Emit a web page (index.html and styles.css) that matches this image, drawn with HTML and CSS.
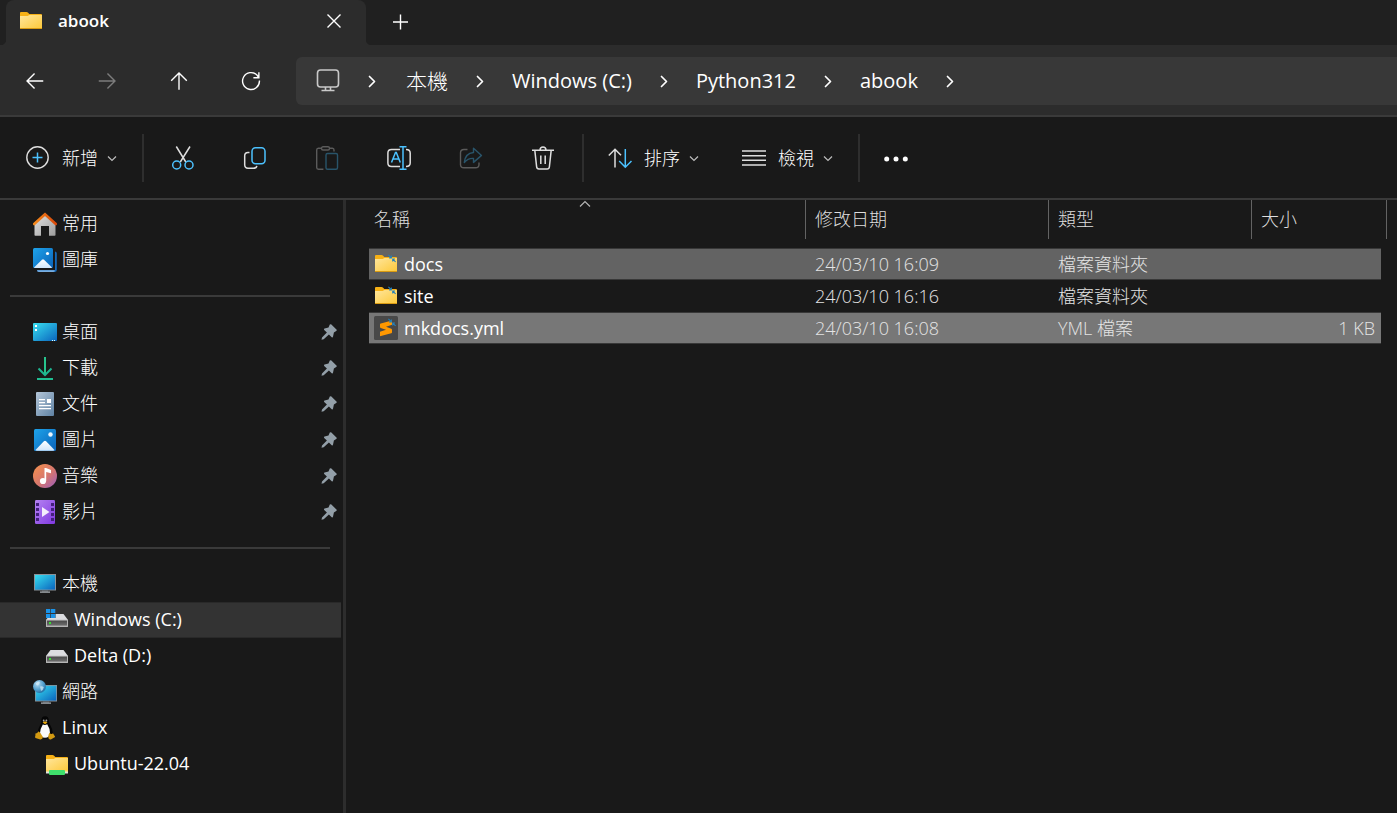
FILE: index.html
```html
<!DOCTYPE html>
<html lang="zh-Hant">
<head>
<meta charset="utf-8">
<meta name="viewport" content="width=device-width, initial-scale=1">
<title>abook</title>
<link rel="stylesheet" href="styles.css">
</head>
<body>
<svg class="defs" width="0" height="0" aria-hidden="true">
  <defs>
    <linearGradient id="gFolder" x1="0" y1="0" x2="1" y2="1"><stop offset="0" stop-color="#ffe69c"/><stop offset="1" stop-color="#fdc93a"/></linearGradient>
    <linearGradient id="gBlue" x1="0" y1="0" x2="1" y2="1"><stop offset="0" stop-color="#1ea3ea"/><stop offset="1" stop-color="#0a62b8"/></linearGradient>
    <linearGradient id="gCyan" x1="0" y1="0" x2="1" y2="1"><stop offset="0" stop-color="#38dff0"/><stop offset="1" stop-color="#0a63bd"/></linearGradient>
    <linearGradient id="gSnow" x1="0" y1="0" x2="0" y2="1"><stop offset="0" stop-color="#ffffff"/><stop offset="1" stop-color="#cfe6fb"/></linearGradient>
    <linearGradient id="gHouse" x1="0" y1="0" x2="1" y2="1"><stop offset="0" stop-color="#e4e4e4"/><stop offset="1" stop-color="#9c9c9c"/></linearGradient>
    <linearGradient id="gRoof" x1="0" y1="0" x2="1" y2="0"><stop offset="0" stop-color="#f58a1c"/><stop offset="1" stop-color="#d9480a"/></linearGradient>
    <linearGradient id="gDoc" x1="0" y1="0" x2="1" y2="1"><stop offset="0" stop-color="#b4c6d8"/><stop offset="1" stop-color="#5f82a3"/></linearGradient>
    <linearGradient id="gMusic" x1="0" y1="0" x2="1" y2="1"><stop offset="0" stop-color="#f7924a"/><stop offset=".55" stop-color="#d5766f"/><stop offset="1" stop-color="#9a5cc0"/></linearGradient>
    <linearGradient id="gVideo" x1="0" y1="0" x2="1" y2="1"><stop offset="0" stop-color="#b583f2"/><stop offset="1" stop-color="#8038e0"/></linearGradient>
    <linearGradient id="gDrive" x1="0" y1="0" x2="0" y2="1"><stop offset="0" stop-color="#4a4a4a"/><stop offset="1" stop-color="#6e6e6e"/></linearGradient>
    <radialGradient id="gGlobe" cx=".35" cy=".3" r=".8"><stop offset="0" stop-color="#b5dcf2"/><stop offset=".6" stop-color="#4e9ccb"/><stop offset="1" stop-color="#1d5f96"/></radialGradient>

    <symbol id="folder" viewBox="0 0 24 24">
      <path d="M1 4q0-1 1-1h5.500q.8 0 1.400.600L10.300 5H22q1 0 1 1v6H1z" fill="#f7b116"/>
      <path d="M1 7h7q.8 0 1.500-.5L10.500 6H23v13.500H1z" fill="url(#gFolder)"/>
      <path d="M1 19h22v1H1z" fill="#d99a12"/>
    </symbol>
    <symbol id="compress" viewBox="0 0 10 10">
      <path d="M1 1l3.300 3.300M1.800 4.300h2.500V1.600M9 8.800L5.800 5.600M8.300 5.600H5.800v2.600" fill="none" stroke="#2580b8" stroke-width="1.200"/>
    </symbol>
    <symbol id="pin" viewBox="0 0 16 16">
      <path d="M8.800.6q.8-.8 1.600 0l5 4.800q.9.800-.2 1.600l-2.300 1.600-.9 4.200q-.4 1.200-1.300.4L7.900 10.600l-5.200 4.700-2.200.5.500-2.200 4.900-5L3.200 5.900q-.6-.9.400-1.300l3.900-1.200z" fill="#939fa8"/>
    </symbol>
    <symbol id="chev" viewBox="0 0 12 12"><path d="M2 4.500l4 4 4-4" fill="none" stroke="#bdbdbd" stroke-width="1.200"/></symbol>
    <symbol id="crumb" viewBox="0 0 16 16"><path d="M5.500 3.500l5 5-5 5" fill="none" stroke="#fff" stroke-width="1.700" stroke-linecap="round" stroke-linejoin="round"/></symbol>
    <symbol id="monitor" viewBox="0 0 24 24">
      <path d="M1 2h22v16.500H1z" fill="#8a9299"/><path d="M2 3h20v14.600H2z" fill="url(#gCyan)"/>
      <path d="M9 18.500h6v1H9z" fill="#6d757b"/><path d="M7 19.500h10v1.200H7z" fill="#b4bbc0"/>
    </symbol>
    <symbol id="drive" viewBox="0 0 24 24">
      <path d="M5.500 6h13l4.500 6H1z" fill="#dcdde0"/><path d="M1 11.800h22v6.700q0 .5-.5.500h-21q-.5 0-.5-.5z" fill="#b5b5b5"/>
      <path d="M2 12.600h20v5H2z" fill="url(#gDrive)"/><path d="M4 14h2v2H4z" fill="#35e02f"/>
    </symbol>
  </defs>
</svg>

<header class="titlebar">
  <div class="tab">
    <svg class="icon"><use href="#folder"/></svg>
    <span class="tab-title">abook</span>
    <button class="icon-btn" type="button" aria-label="關閉索引標籤">
      <svg class="icon" viewBox="0 0 24 24"><path d="M5.500 5.500l13 13M18.500 5.500l-13 13" fill="none" stroke="#fff" stroke-width="1.400"/></svg>
    </button>
  </div>
  <button class="icon-btn new-tab" type="button" aria-label="新增索引標籤">
    <svg class="icon" viewBox="0 0 24 24"><path d="M12.500 4.500v15M5 12h15" fill="none" stroke="#fff" stroke-width="1.400"/></svg>
  </button>
</header>

<div class="navbar">
  <div class="nav-buttons">
    <button class="icon-btn" type="button" aria-label="上一頁"><svg class="icon line" viewBox="0 0 24 24"><path d="M21 12H3.500M11.500 3.800L3.300 12l8.200 8.200"/></svg></button>
    <button class="icon-btn dim" type="button" aria-label="下一頁" disabled><svg class="icon line" viewBox="0 0 24 24"><path d="M3 12h17.500M12.500 3.800l8.200 8.200-8.200 8.200"/></svg></button>
    <button class="icon-btn" type="button" aria-label="上一層"><svg class="icon line" viewBox="0 0 24 24"><path d="M12 21.500V3M3.500 11.700L12 3.200l8.500 8.500"/></svg></button>
    <button class="icon-btn" type="button" aria-label="重新整理"><svg class="icon line" viewBox="0 0 24 24"><path d="M21.200 11.500a9.200 9.200 0 1 1-2.700-6l1.800 2.500M20.600 2.500v6h-6"/></svg></button>
  </div>
  <nav class="address" aria-label="路徑">
    <button class="icon-btn" type="button" aria-label="位置"><svg class="icon" viewBox="0 0 24 24" fill="none" stroke="#c9c9c9" stroke-width="1.600"><rect x="1.500" y="1" width="21" height="17" rx="3"/><path d="M9.500 18v3.500M14.500 18v3.500M5.500 21.500h13"/></svg></button>
    <svg class="crumb"><use href="#crumb"/></svg>
    <button class="cjk" type="button">本機</button>
    <svg class="crumb"><use href="#crumb"/></svg>
    <button type="button">Windows (C:)</button>
    <svg class="crumb"><use href="#crumb"/></svg>
    <button type="button">Python312</button>
    <svg class="crumb"><use href="#crumb"/></svg>
    <button type="button">abook</button>
    <svg class="crumb"><use href="#crumb"/></svg>
  </nav>
</div>

<div class="toolbar" role="toolbar" aria-label="命令">
  <button class="cmd" type="button">
    <svg class="icon" viewBox="0 0 24 24" fill="none"><circle cx="11.500" cy="11.500" r="10.700" stroke="#dedede" stroke-width="1.400"/><path d="M11.500 6.500v10M6.500 11.500h10" stroke="#4cc2ff" stroke-width="1.500"/></svg>
    <span>新增</span><svg class="chev"><use href="#chev"/></svg>
  </button>
  <span class="sep"></span>
  <div class="cmd-icons">
    <button class="icon-btn" type="button" aria-label="剪下"><svg class="icon" viewBox="0 0 24 24" fill="none" stroke-width="1.500"><path d="M5.300.5L14.800 16M19 .5L9.300 16" stroke="#dedede"/><circle cx="5.700" cy="19" r="4" stroke="#4cc2ff"/><circle cx="18" cy="19" r="4" stroke="#4cc2ff"/></svg></button>
    <button class="icon-btn" type="button" aria-label="複製"><svg class="icon" viewBox="0 0 24 24" fill="none" stroke-width="1.500"><path d="M6.500 6.500H5q-3.300 0-3.300 3.300v9q0 3.400 3.300 3.400h5.500q3 0 3.300-2.400" stroke="#dedede"/><rect x="9" y="1.700" width="13" height="16" rx="3.500" stroke="#4cc2ff"/></svg></button>
    <button class="icon-btn" type="button" aria-label="貼上" disabled><svg class="icon" viewBox="0 0 24 24" fill="none" stroke-width="1.400"><path d="M6.500 2.200H3.300Q1.700 2.200 1.700 4v17.500q0 1.700 1.700 1.700h5M14.500 2.200h3Q19 2.200 19 4v1.500" stroke="#5b5b5b"/><rect x="6.500" y=".8" width="8" height="3.200" rx="1.500" stroke="#5b5b5b"/><rect x="11" y="7.500" width="11.500" height="15.700" rx="1.500" stroke="#29546a"/></svg></button>
    <button class="icon-btn" type="button" aria-label="重新命名"><svg class="icon" viewBox="0 0 24 24" fill="none" stroke-width="1.500"><path d="M13 3.500H4.500Q.9 3.500.9 7v10q0 3.500 3.600 3.500H13M19 3.500q4.200 0 4.200 3.500v10q0 3.500-4.200 3.500" stroke="#dedede"/><path d="M4.500 16.500L8.500 6.500h.8l4 10M6 13h6M12.500.8h7M16 .8v22.400M12.500 23.200h7" stroke="#4cc2ff"/></svg></button>
    <button class="icon-btn" type="button" aria-label="共用" disabled><svg class="icon" viewBox="0 0 24 24" fill="none" stroke-width="1.400" stroke-linejoin="round"><path d="M8.500 3.500H5q-3.500 0-3.500 3.500v11.500q0 3.300 3.500 3.300h11.500q3.500 0 3.500-3.300v-2" stroke="#5b5b5b"/><path d="M14.500 2.200l8 7.200-8 7v-4Q9 12 5.300 16.500q.9-9.300 9.200-10z" stroke="#29546a"/></svg></button>
    <button class="icon-btn" type="button" aria-label="刪除"><svg class="icon" viewBox="0 0 24 24" fill="none" stroke="#dedede" stroke-width="1.500"><path d="M1 4.200h22M3.800 4.200l1.800 16.500q.2 2.200 2.300 2.200h8.200q2.100 0 2.300-2.200l1.800-16.500M9 4q.2-3 3-3t3 3M9.800 9.500v8.500M14.200 9.500v8.500"/></svg></button>
  </div>
  <span class="sep"></span>
  <button class="cmd" type="button">
    <svg class="icon" viewBox="0 0 24 24" fill="none" stroke-width="1.500"><path d="M7 21.500V3.500M.8 9.500L7 3.300l6 6" stroke="#dedede"/><path d="M17.300 3v18M11.200 15l6.100 6.200L23.500 15" stroke="#4cc2ff"/></svg>
    <span>排序</span><svg class="chev"><use href="#chev"/></svg>
  </button>
  <button class="cmd view" type="button">
    <svg class="icon" viewBox="0 0 24 24" stroke="#dedede" stroke-width="1.400"><path d="M0 5h24M0 9.700h24M0 14.300h24M0 19h24"/></svg>
    <span>檢視</span><svg class="chev"><use href="#chev"/></svg>
  </button>
  <span class="sep"></span>
  <button class="icon-btn" type="button" aria-label="查看更多"><svg class="icon" viewBox="0 0 24 24" fill="#fff"><circle cx="2.700" cy="13" r="2.500"/><circle cx="12" cy="13" r="2.500"/><circle cx="21.300" cy="13" r="2.500"/></svg></button>
</div>

<div class="body">
  <nav class="sidebar" aria-label="瀏覽窗格">
    <a class="item" href="#home"><svg class="icon" viewBox="0 0 24 24"><path d="M1.500 11L12 1.500 22.500 11v12q0 .8-.8.800H16v-9.800H8v9.800H2.300q-.8 0-.8-.8z" fill="url(#gHouse)"/><path d="M1.200 12L12 2.200 22.800 12" fill="none" stroke="url(#gRoof)" stroke-width="2.600" stroke-linecap="round"/></svg><span>常用</span></a>
    <a class="item" href="#gallery"><svg class="icon" viewBox="0 0 24 24"><path d="M4 21.500h17V3.500h.8q2 0 2 2V22q0 2-2 2H6q-2 0-2-2.500z" fill="#1568b8"/><path d="M4 22.200h17q.5 0 1 .6-.5 1.200-2 1.200H6q-2 0-2-1.800z" fill="#79aee0"/><path d="M0 20.500h20.500V2H22v20H2q-2 0-2-1.500z" fill="#191919"/><rect width="20" height="20" rx="1.500" fill="url(#gBlue)"/><path d="M1 19.500l8-7.700q1-.9 2 0l8 7.700q-.5.500-1.300.5H2.300q-.8 0-1.300-.5z" fill="url(#gSnow)"/><circle cx="14.500" cy="5.500" r="1.600" fill="#fff"/></svg><span>圖庫</span></a>
    <hr>
    <a class="item" href="#desktop"><svg class="icon" viewBox="0 0 24 24"><rect y="3" width="24" height="18" rx="1" fill="url(#gCyan)"/><path d="M2 5h2v2H2zM2 9h2v2H2z" fill="#fff"/><path d="M19 20h1v1h-1zM21 20h1v1h-1z" fill="#dff"/></svg><span>桌面</span><svg class="pin"><use href="#pin"/></svg></a>
    <a class="item" href="#downloads"><svg class="icon" viewBox="0 0 24 24" fill="none" stroke-width="2"><path d="M12 1v18" stroke="#27c38d"/><path d="M5.500 12.500L12 19l6.500-6.500" stroke="#1eb591"/><path d="M4 23h16" stroke="#20bd92"/></svg><span>下載</span><svg class="pin"><use href="#pin"/></svg></a>
    <a class="item" href="#documents"><svg class="icon" viewBox="0 0 24 24"><rect x="3" width="18" height="24" rx="1" fill="url(#gDoc)"/><path d="M6 7h6v1.200H6zM6 10h6v1.200H6zM6 13h12v1.200H6zM6 16h12v1.200H6zM14 7h4v4h-4z" fill="#fff"/></svg><span>文件</span><svg class="pin"><use href="#pin"/></svg></a>
    <a class="item" href="#pictures"><svg class="icon" viewBox="0 0 24 24"><rect x="1" y="1" width="22" height="22" rx="1.500" fill="url(#gBlue)"/><path d="M2.500 22l8.400-8.700q1.100-1 2.200 0l8.400 8.700q-.3.800-1.500.8H4q-1.200 0-1.500-.8z" fill="url(#gSnow)"/><circle cx="17.500" cy="6.500" r="2.200" fill="#e8f6ff"/></svg><span>圖片</span><svg class="pin"><use href="#pin"/></svg></a>
    <a class="item" href="#music"><svg class="icon" viewBox="0 0 24 24"><circle cx="12" cy="12" r="12" fill="url(#gMusic)"/><circle cx="10" cy="17" r="3.100" fill="#fff"/><path d="M11.500 4h1.500l5 2v3.300L13.200 8v9h-1.700z" fill="#fff"/></svg><span>音樂</span><svg class="pin"><use href="#pin"/></svg></a>
    <a class="item" href="#videos"><svg class="icon" viewBox="0 0 24 24"><rect x="2" width="20" height="24" rx="1.200" fill="url(#gVideo)"/><path d="M3 3h3v3H3zM3 8h3v3H3zM3 13h3v3H3zM3 18h3v3H3zM18 3h3v3h-3zM18 8h3v3h-3zM18 13h3v3h-3zM18 18h3v3h-3z" fill="#43207c"/><path d="M9 7l7.500 5L9 17z" fill="#f4eefc"/></svg><span>影片</span><svg class="pin"><use href="#pin"/></svg></a>
    <hr>
    <a class="item" href="#pc"><svg class="icon"><use href="#monitor"/></svg><span>本機</span></a>
    <a class="item child latin current" href="#c" aria-current="true"><svg class="icon" viewBox="0 0 24 24"><use href="#drive"/><path d="M0 0h10.500v10H0z" fill="#333"/><path d="M1 1h4.300v4H1zM6 1h4.300v4H6zM1 6h4.300v4H1zM6 6h4.300v4H6z" fill="#1b93e8"/></svg><span>Windows (C:)</span></a>
    <a class="item child latin" href="#d"><svg class="icon"><use href="#drive"/></svg><span>Delta (D:)</span></a>
    <a class="item" href="#network"><svg class="icon" viewBox="0 0 24 24"><path d="M2 5h22v16.500H2z" fill="#8a9299"/><path d="M2.800 5.800h20.400v14.800H2.800z" fill="url(#gCyan)"/><path d="M10 21.500h6v1h-6z" fill="#6d757b"/><path d="M8 22.500h10v1.200H8z" fill="#b4bbc0"/><circle cx="6.500" cy="6.500" r="6.500" fill="url(#gGlobe)"/><path d="M2.500 3.500q2-2.300 4-1.800 1 1.200-.5 2.300-.5 1.800-2.200 1.300zM7 6.500q2.500-.8 3.800.8-.5 2.700-2.800 3.700z" fill="#d8eefa" opacity=".7"/></svg><span>網路</span></a>
    <a class="item latin" href="#linux"><svg class="icon" viewBox="0 0 24 24"><path d="M12 .2q3.800 0 3.800 4.300 0 2.500 1.500 4.800 2.700 4 2.500 8.200l-2 5H6.500l-2-5q.3-4.500 2.500-8 1.500-2.500 1.400-5Q8.400.2 12 .2z" fill="#060606"/><path d="M9.800 8.500q2.200 1 4.400-.2 3 4.700 2.800 8.700-.3 4.700-5 4.700t-5-4.700q0-3.800 2.800-8.500z" fill="#fafafa"/><ellipse cx="10.700" cy="4.600" rx=".9" ry="1.100" fill="#aaa"/><ellipse cx="13.400" cy="4.600" rx=".9" ry="1.100" fill="#aaa"/><path d="M9.600 6.500l2.400-1.200 2.500 1.200-2.400 1.800z" fill="#e8a90c"/><path d="M5.300 15.500q1-.2 2.200 1.800l2.300 3.500q.3 2.700-2.500 2.600L2.500 22q-.8-.6-.1-2.600V17.500q1.800.2 2.900-2zM16.500 16.500q.6 2 2.500 1.300 1.500-.6 1.700.8l1.300 2q.3.700-1.200 1.200l-2.500 1.500q-2.500.8-3-1.500 0-3.500 1.200-5.300z" fill="#d39a12"/></svg><span>Linux</span></a>
    <a class="item child latin" href="#ubuntu"><svg class="icon" viewBox="0 0 24 24"><use href="#folder"/><path d="M1 18.500h22v3H1z" fill="#dfe5df"/><path d="M1 18h22v1.500H1z" fill="#fdd35c"/><rect x="4" y="18" width="16" height="5" rx="1" fill="#3fe06c"/></svg><span>Ubuntu-22.04</span></a>
  </nav>

  <main class="content">
    <table class="files">
      <colgroup><col><col class="c-date"><col class="c-type"><col class="c-size"><col class="c-end"></colgroup>
      <thead>
        <tr>
          <th scope="col" class="sorted" aria-sort="ascending"><button type="button">名稱</button><svg class="caret" viewBox="0 0 12 8"><path d="M1 6.500l5-5 5 5" fill="none" stroke="#b5b5b5" stroke-width="1.200"/></svg></th>
          <th scope="col"><button type="button">修改日期</button></th>
          <th scope="col"><button type="button">類型</button></th>
          <th scope="col" colspan="2"><button type="button">大小</button></th>
        </tr>
      </thead>
      <tbody>
        <tr class="gap"><td colspan="5"></td></tr>
        <tr class="selected">
          <td class="name"><a href="#docs"><svg class="icon" viewBox="0 0 24 24"><use href="#folder"/><use href="#compress" x="13.500" y="2" width="9" height="9"/></svg><span>docs</span></a></td>
          <td>24/03/10 16:09</td><td>檔案資料夾</td><td></td><td class="end"></td>
        </tr>
        <tr>
          <td class="name"><a href="#site"><svg class="icon" viewBox="0 0 24 24"><use href="#folder"/><use href="#compress" x="13.500" y="2" width="9" height="9"/></svg><span>site</span></a></td>
          <td>24/03/10 16:16</td><td>檔案資料夾</td><td></td><td class="end"></td>
        </tr>
        <tr class="selected bright">
          <td class="name"><a href="#mkdocs"><svg class="icon" viewBox="0 0 24 24"><rect width="24" height="24" rx="1.500" fill="#484848"/><path d="M6 8.500q0-.8.800-1L18 4.500v4.300l-6 2 5.300 1.900q.7.300.7 1v2.500q0 .8-.8 1L6 20.300v-4.500l6-2-5.300-1.900q-.7-.3-.7-1z" fill="#ff9800"/><use href="#compress" x="13.500" y="2" width="9" height="9"/></svg><span>mkdocs.yml</span></a></td>
          <td>24/03/10 16:08</td><td>YML 檔案</td><td class="size">1 KB</td><td class="end"></td>
        </tr>
      </tbody>
    </table>
  </main>
</div>
</body>
</html>
```
FILE: styles.css
```css
:root {
  --ui: "Open Sans", "Noto Sans CJK TC", sans-serif;
  --bg: #191919;
  --bar: #2c2c2c;
  --title: #202020;
  --line: #3a3a3a;
}

* { box-sizing: border-box; }

body {
  margin: 0;
  min-height: 100vh;
  display: flex;
  flex-direction: column;
  background: var(--bg);
  color: #fff;
  font: 18px/24px var(--ui);
}

button {
  margin: 0;
  padding: 0;
  border: 0;
  background: none;
  color: inherit;
  font: inherit;
}

a { color: inherit; text-decoration: none; }
svg { display: block; flex: none; }
.defs { position: absolute; }
.icon { width: 24px; height: 24px; }
.line { fill: none; stroke: #fff; stroke-width: 1.5; }
.dim { opacity: 0.38; }

/* Title bar */
.titlebar {
  display: flex;
  align-items: center;
  height: 45px;
  padding-left: 6px;
  background: var(--title);
}

.tab {
  position: relative;
  display: flex;
  align-items: center;
  width: 360px;
  height: 100%;
  padding: 0 20px 4px 13px;
  border-radius: 8px 8px 0 0;
  background: var(--bar);
}

.tab::before,
.tab::after {
  content: "";
  position: absolute;
  bottom: 0;
  width: 6px;
  height: 6px;
}

.tab::before { right: 100%; background: radial-gradient(circle at 0 0, var(--title) 6px, var(--bar) 7px); }
.tab::after { left: 100%; background: radial-gradient(circle at 100% 0, var(--title) 6px, var(--bar) 7px); }

.tab-title { flex: 1; margin-left: 15px; font-size: 17px; font-weight: 600; }
.new-tab { margin-left: 22px; padding-bottom: 2px; }

/* Navigation */
.navbar {
  display: flex;
  align-items: center;
  height: 72px;
  padding: 1px 0 0 23px;
  border-bottom: 2px solid var(--line);
  background: var(--bar);
}

.nav-buttons { display: flex; gap: 48px; }
.nav-buttons .icon { padding: 1px; }

.address {
  flex: 1;
  display: flex;
  align-items: center;
  gap: 24px;
  height: 48px;
  margin: 0 0 0 33px;
  padding-left: 20px;
  border-radius: 6px 0 0 6px;
  background: #383838;
  font-size: 20px;
  white-space: nowrap;
}

.address .cjk { padding-left: 2px; font-size: 21px; font-weight: 300; }
.crumb { width: 16px; height: 16px; }

/* Commands */
.toolbar {
  display: flex;
  align-items: center;
  height: 83px;
  padding: 0 0 0 26px;
  border-bottom: 2px solid var(--line);
  font-weight: 300;
}

.cmd { display: flex; align-items: center; gap: 12px; }
.cmd.view { margin-left: 42px; }
.chev { width: 12px; height: 12px; margin-left: -4px; }
.sep { width: 2px; height: 48px; margin: 0 24px; background: #2e2e2e; }
.cmd-icons { display: flex; gap: 48px; padding: 0 3px; }

/* Panes */
.body { flex: 1; display: flex; }

.sidebar {
  flex: none;
  width: 346px;
  padding: 6px 0;
  border-right: 3px solid #2d2d2d;
  font-weight: 300;
}

.item {
  display: flex;
  align-items: center;
  gap: 5px;
  height: 36px;
  margin-right: 2px;
  padding: 0 4px 0 33px;
}

.item span { flex: 1; padding-bottom: 2px; }
.item.latin { font-weight: 400; }
.item.child { padding-left: 45px; }
.item.current { background: #333; box-shadow: inset 0 1px #292929, inset 0 -1px #292929; }
.pin { width: 16px; height: 16px; }

.sidebar hr {
  height: 2px;
  margin: 17px 13px 17px 10px;
  border: 0;
  background: var(--line);
}

.content { flex: 1; min-width: 0; padding: 0 10px 0 23px; }

.files { width: 100%; table-layout: fixed; border-collapse: separate; border-spacing: 0; }
.c-date { width: 243px; }
.c-type { width: 203px; }
.c-size { width: 129px; }
.c-end { width: 6px; }

.files th {
  position: relative;
  height: 39px;
  padding: 0 9px 2px;
  border-right: 1px solid #636363;
  color: #dedede;
  font-weight: 300;
  text-align: left;
}

.files th.sorted { padding-left: 5px; }
.caret { position: absolute; top: 0; left: 50%; width: 12px; height: 8px; margin-left: -8px; }

.files td { height: 32px; padding: 0 9px; color: #e4e4e4; font-weight: 300; white-space: nowrap; }
.files .gap td { height: 9px; padding: 0; }
.files td.name { padding: 0 5px; color: #fff; font-weight: 400; }
.name a { display: flex; align-items: center; gap: 6px; }
.files td.size { padding: 0 6px; text-align: right; }

.selected td:not(.end) {
  border-top: 1px solid #383838;
  border-bottom: 1px solid #383838;
  background: #636363;
}

.bright td:not(.end) { background: #777; }
```
